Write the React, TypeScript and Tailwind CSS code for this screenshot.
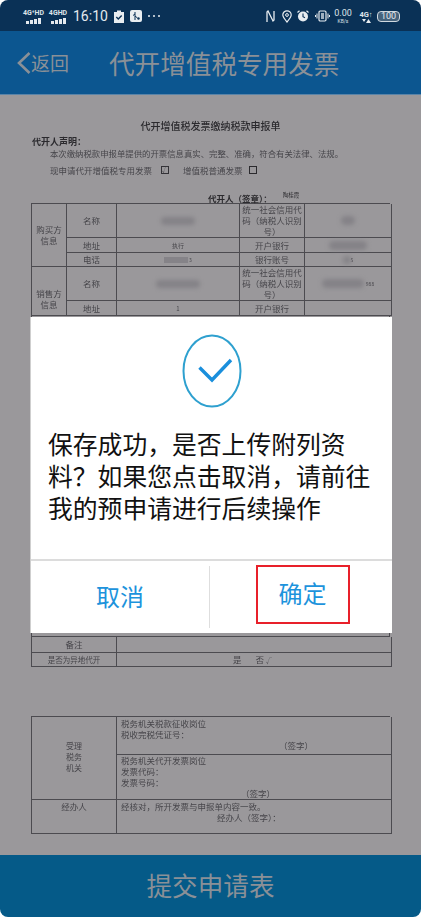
const cjk = "font-['Noto_Sans_CJK_SC',sans-serif]"

function Signal({ label, width }: { label: string; width: string }) {
  return (
    <div className={`flex flex-col items-center ${width}`}>
      <span className="font-['Roboto',sans-serif] text-[7px] font-bold leading-[8px] text-[#dfe5ea] whitespace-nowrap">{label}</span>
      <div className="mt-[1px] flex items-end gap-[1px]">
        <i className="block w-[3px] h-[3px] bg-[#e4e9ee]" />
        <i className="block w-[3px] h-[4px] bg-[#e4e9ee]" />
        <i className="block w-[3px] h-[5px] bg-[#e4e9ee]" />
        <i className="block w-[3px] h-[6px] bg-[#e4e9ee]" />
      </div>
    </div>
  )
}

function StatusBar() {
  return (
    <div className="flex h-[31px] items-center bg-[#0a3156] pl-[23px] pr-[21px] pt-[1px] text-[#e4e9ee]">
      <Signal label="4G⁺HD" width="w-[21px]" />
      <div className="ml-[5px]"><Signal label="4GHD" width="w-[18px]" /></div>
      <span className="ml-[6px] font-['Roboto',sans-serif] text-[14px] leading-none">16:10</span>
      <svg className="ml-[6px]" width="10" height="13" viewBox="0 0 10 13">
        <path d="M0 2h3V0.5h4V2h3v11H0z" fill="#e8edf1" />
        <path d="M2.3 7l2 2 3.4-3.6" fill="none" stroke="#0a3156" strokeWidth="1.4" />
      </svg>
      <svg className="ml-[6px]" width="12" height="12" viewBox="0 0 12 12">
        <rect width="12" height="12" rx="2" fill="#e8edf1" />
        <path d="M5 2v8M5 4l-2 1.5M5 6l2.5 2" fill="none" stroke="#0a3156" strokeWidth="1" />
        <circle cx="8.5" cy="8.5" r="1.2" fill="#0a3156" />
      </svg>
      <div className="ml-[6px] flex gap-[3px]">
        <i className="block size-[2px] rounded-full bg-[#e8edf1]" />
        <i className="block size-[2px] rounded-full bg-[#e8edf1]" />
        <i className="block size-[2px] rounded-full bg-[#e8edf1]" />
      </div>

      <svg className="ml-auto" width="9" height="13" viewBox="0 0 9 13">
        <path d="M1 12V2l1-1 5 10 1-1V1" fill="none" stroke="#e8edf1" strokeWidth="1.3" />
      </svg>
      <svg className="ml-[7px]" width="10" height="13" viewBox="0 0 10 13">
        <path d="M5 12C2.5 9 .8 7 .8 5a4.2 4.2 0 0 1 8.4 0c0 2-1.7 4-4.2 7z" fill="none" stroke="#e8edf1" strokeWidth="1.2" />
        <circle cx="5" cy="5" r="1.4" fill="none" stroke="#e8edf1" />
      </svg>
      <svg className="ml-[5px]" width="12" height="12" viewBox="0 0 12 12">
        <circle cx="6" cy="6.5" r="5" fill="#e8edf1" />
        <path d="M6 3.5v3.2l2 1" fill="none" stroke="#0a3156" strokeWidth="1.1" />
        <path d="M.5 2.5 2.5.8M11.5 2.5 9.5.8" stroke="#e8edf1" strokeWidth="1.2" />
      </svg>
      <svg className="ml-[6px]" width="15" height="12" viewBox="0 0 15 12">
        <rect x="4" y="1" width="7" height="10" rx="1.2" fill="none" stroke="#e8edf1" strokeWidth="1.2" />
        <rect x="6" y="3" width="3" height="6" fill="#9fb0c0" />
        <path d="M2 3.5v5M.5 5v2M13 3.5v5M14.5 5v2" stroke="#e8edf1" />
      </svg>
      <div className="ml-[4px] flex w-[18px] flex-col items-center font-['Roboto',sans-serif] text-[#dfe5ea]">
        <span className="text-[9px] leading-[10px]">0.00</span>
        <span className="text-[5px] leading-[7px]">KB/s</span>
      </div>
      <div className="ml-[7px] flex w-[14px] flex-col items-center text-[#dfe5ea]">
        <span className="font-['Roboto',sans-serif] text-[7.5px] font-bold leading-[9px] whitespace-nowrap">4G↑</span>
        <svg width="9" height="4" viewBox="0 0 9 4"><path d="M0 0h4L2 3zM6.5 0 9 4H4z" fill="#e8edf1" /></svg>
      </div>
      <div className="ml-[4px] flex h-[11px] w-[23px] items-center justify-center rounded-[4px] border border-[#cfd8df] bg-[#45627c] font-['Roboto',sans-serif] text-[9px] leading-none text-[#e4e9ee]">
        100
      </div>
    </div>
  )
}

function Header() {
  return (
    <div className={`flex h-[64px] items-center border-b border-[#5a84a8] bg-[#0c5690] pl-[17px] text-[#8a9097] ${cjk}`}>
      <svg width="14" height="22" viewBox="0 0 14 22">
        <path d="M12.5 1 2 11l10.5 10" fill="none" stroke="#8a9097" strokeWidth="2.6" />
      </svg>
      <span className="text-[19px] leading-none">返回</span>
      <span className="ml-[40px] text-[25.6px] leading-none">代开增值税专用发票</span>
    </div>
  )
}

const cell = 'flex items-center justify-center border-r border-b border-[#4c4b50] text-center'

function Blob({ className }: { className: string }) {
  return <div className={`rounded-full bg-[#848287] blur-[2px] ${className}`} />
}

function PartyRows({ title, buyer }: { title: string[]; buyer?: boolean }) {
  const taxLabel = (
    <span className="leading-[11px]">统一社会信用代<br />码（纳税人识别<br />号）</span>
  )
  return (
    <>
      <div className={`${cell} ${buyer ? 'row-span-3' : 'row-span-2 pt-[16px]'} flex-col leading-[11px]`}>
        <span>{title[0]}</span>
        <span>{title[1]}</span>
      </div>
      <div className={cell}>名称</div>
      <div className={cell}>
        <Blob className={buyer ? 'h-[8px] w-[34px]' : 'h-[8px] w-[44px]'} />
      </div>
      <div className={cell}>{taxLabel}</div>
      <div className={cell}>
        <Blob className={buyer ? 'h-[9px] w-[14px]' : 'h-[9px] w-[42px]'} />
        {!buyer && <span className="ml-[2px] text-[5px]">988</span>}
      </div>
      <div className={cell}>地址</div>
      <div className={`${cell} text-[6px]`}>{buyer ? '执行' : '1'}</div>
      <div className={cell}>开户银行</div>
      <div className={cell}>{buyer && <Blob className="h-[9px] w-[38px]" />}</div>
    </>
  )
}

function FirstTable() {
  return (
    <div className="mx-[31px] border-t border-l border-[#4c4b50] text-[8.5px] text-[#46454a]">
      <div className="grid grid-cols-[35px_50px_123px_65px_87px] grid-rows-[34px_15px_14px_34px_15px]">
        <PartyRows title={['购买方', '信息']} buyer />
        <div className={cell}>电话</div>
        <div className={`${cell} gap-[1px]`}>
          <div className="h-[6px] w-[24px] bg-[#858388]" />
          <span className="text-[5px]">3</span>
        </div>
        <div className={cell}>银行账号</div>
        <div className={cell}>
          <Blob className="h-[8px] w-[8px]" />
          <span className="text-[5px]">5</span>
        </div>
        <PartyRows title={['销售方', '信息']} />
      </div>
      {/* rows under the dialog */}
      <div className="h-[321px] border-r border-b border-[#4c4b50]" />
      <div className="grid grid-cols-[85px_275px] grid-rows-[16px_14px]">
        <div className={cell}>备注</div>
        <div className={cell} />
        <div className={`${cell} text-[7.5px]`}>是否为异地代开</div>
        <div className={`${cell} gap-[14px] pr-[3px]`}>
          <span>是</span>
          <span>否 <span className="text-[6px]">√</span></span>
        </div>
      </div>
    </div>
  )
}

function SecondTable() {
  const textCell = 'border-r border-b border-[#4c4b50] pl-[4px] leading-[11px]'
  return (
    <div className="mx-[31px] mt-[49px] grid grid-cols-[85px_275px] grid-rows-[38px_45px_34px] border-t border-l border-[#4c4b50] text-[8.5px] text-[#46454a]">
      <div className={`${cell} row-span-2 flex-col pb-[4px] text-[8px] leading-[11px]`}>
        <span>受理</span>
        <span>税务</span>
        <span>机关</span>
      </div>
      <div className={`${textCell} pt-[1px]`}>
        <div>税务机关税款征收岗位</div>
        <div>税收完税凭证号：</div>
        <div className="pl-[158px]">（签字）</div>
      </div>
      <div className={textCell}>
        <div>税务机关代开发票岗位</div>
        <div>发票代码：</div>
        <div>发票号码：</div>
        <div className="pl-[120px]">（签字）</div>
      </div>
      <div className="border-r border-b border-[#4c4b50] pt-[1px] text-center leading-[11px]">经办人</div>
      <div className={`${textCell} pt-[1px]`}>
        <div>经核对，所开发票与申报单内容一致。</div>
        <div className="pl-[96px]">经办人（签字）：</div>
      </div>
    </div>
  )
}

function Document() {
  return (
    <div className="flex-1 bg-[#9a989b] blur-[0.4px] font-['Noto_Sans_CJK_SC',sans-serif]">
      <h1 className="mt-[25px] text-center text-[10px] font-medium leading-[12px] text-[#2b2a2e]">代开增值税发票缴纳税款申报单</h1>
      <p className="mt-[5px] pl-[32px] text-[9px] font-bold leading-[10px] text-[#2b2a2e]">代开人声明：</p>
      <p className="mt-[1px] pl-[50px] text-[8.4px] leading-[10px] text-[#46454a] whitespace-nowrap">本次缴纳税款申报单提供的开票信息真实、完整、准确，符合有关法律、法规。</p>
      <div className="mt-[7px] flex items-center pl-[50px] text-[8.5px] leading-[10px] text-[#46454a]">
        <span className="w-[111px] whitespace-nowrap">现申请代开增值税专用发票</span>
        <span className="flex h-[8px] w-[8px] items-center justify-center border border-[#333237] text-[6px] leading-none">√</span>
        <span className="ml-[14px] whitespace-nowrap">增值税普通发票</span>
        <span className="ml-[6px] h-[8px] w-[8px] border border-[#2b2a2e]" />
      </div>
      <div className="mt-[18px] flex h-[10px] items-end pl-[208px] text-[#2b2a2e]">
        <span className="text-[8.5px] font-bold leading-[10px]">代开人（签章）：</span>
        <span className="mb-[5px] ml-[11px] text-[5.5px] leading-[6px]">陶桂霞</span>
      </div>
      <FirstTable />
      <SecondTable />
    </div>
  )
}

function Dialog() {
  return (
    <div className={`absolute left-[30px] top-[317px] flex h-[316px] w-[362px] flex-col border-l border-[#cfcfcf] bg-white ${cjk}`}>
      <svg className="mx-auto mt-[17px]" width="60" height="74" viewBox="0 0 60 74">
        <ellipse cx="30" cy="37" rx="28.5" ry="35.5" fill="none" stroke="#2ea0cf" strokeWidth="2" />
        <path d="M17.5 33.5 30 46 49 26" fill="none" stroke="#1a8fdc" strokeWidth="3.4" />
      </svg>
      <p className="mt-[19px] pl-[17px] pr-[20px] text-[24.8px] leading-[32px] text-[#111]">
        保存成功，是否上传附列资料？如果您点击取消，请前往我的预申请进行后续操作
      </p>
      <div className="mt-auto flex h-[74px] border-t-2 border-[#dcdcdc] text-[24px] leading-none text-[#1d93dc]">
        <div className="flex flex-1 items-center justify-center">
          <span className="flex h-[62px] w-full items-center justify-center border-r border-[#dedede] pb-[3px]">取消</span>
        </div>
        <div className="flex flex-1 items-start justify-center pl-[3px] pt-[4px]">
          <span className="flex h-[59px] w-[94px] items-center justify-center border-2 border-[#e8202a] pb-[3px]">确定</span>
        </div>
      </div>
    </div>
  )
}

export default function App() {
  return (
    <div className="relative flex h-[917px] w-[421px] flex-col overflow-hidden rounded-[8px]">
      <StatusBar />
      <Header />
      <Document />
      <div className={`flex h-[62px] items-center justify-center bg-[#055a88] pb-[3px] text-[25.6px] leading-none text-[#8a9097] ${cjk}`}>
        提交申请表
      </div>
      <Dialog />
    </div>
  )
}
